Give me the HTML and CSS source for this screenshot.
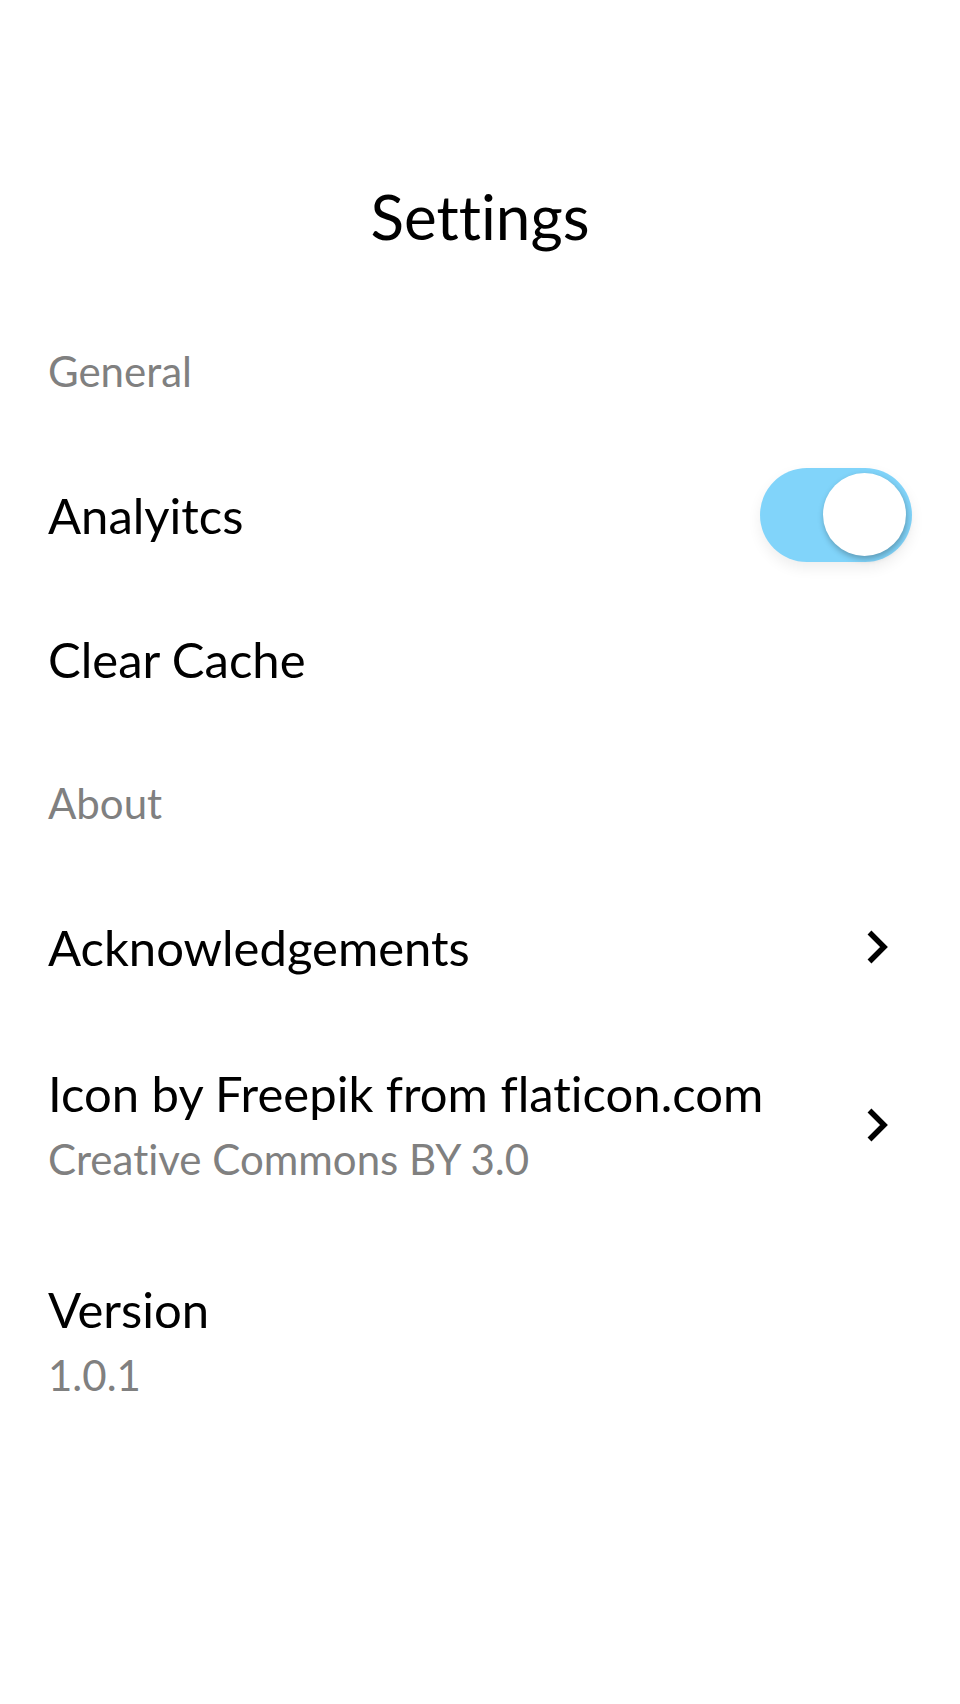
FILE: index.html
```html
<!DOCTYPE html>
<html lang="en">
<head>
<meta charset="utf-8">
<title>Settings</title>
<link rel="stylesheet" href="styles.css">
</head>
<body>
<div class="screen">
  <header class="header">
    <h1 class="title">Settings</h1>
  </header>

  <section class="section">
    <div class="row section-label">General</div>
    <div class="row">
      <span class="label">Analyitcs</span>
      <div class="toggle on" role="switch" aria-checked="true">
        <span class="knob"></span>
      </div>
    </div>
    <div class="row">
      <span class="label">Clear Cache</span>
    </div>
  </section>

  <section class="section">
    <div class="row section-label">About</div>
    <div class="row link-row">
      <span class="label">Acknowledgements</span>
      <svg class="chevron" viewBox="0 0 32 44" width="32" height="44" aria-hidden="true">
        <polyline points="9.5,7.5 24,22 9.5,36.5" />
      </svg>
    </div>
    <div class="row row-tall link-row">
      <div class="stack">
        <span class="label">Icon by Freepik from flaticon.com</span>
        <span class="sub">Creative Commons BY 3.0</span>
      </div>
      <svg class="chevron" viewBox="0 0 32 44" width="32" height="44" aria-hidden="true">
        <polyline points="9.5,7.5 24,22 9.5,36.5" />
      </svg>
    </div>
    <div class="row row-tall">
      <div class="stack">
        <span class="label">Version</span>
        <span class="sub">1.0.1</span>
      </div>
    </div>
  </section>
</div>
</body>
</html>
```

FILE: styles.css
```css
* {
  box-sizing: border-box;
}

html, body {
  margin: 0;
  padding: 0;
  background: #ffffff;
}

body {
  font-family: "Lato", "Noto Sans", sans-serif;
  font-variant-ligatures: none;
  font-feature-settings: "liga" 0, "dlig" 0;
  color: #000000;
}

.screen {
  width: 960px;
  min-height: 1704px;
  background: #ffffff;
}

.header {
  height: 299px;
  padding-top: 133px;
  display: flex;
  align-items: center;
  justify-content: center;
}

.header .title {
  margin: 0;
  height: 166px;
  display: flex;
  align-items: center;
  font-size: 62px;
  font-weight: 400;
  line-height: 1;
}

.section {
  display: flex;
  flex-direction: column;
}

.row {
  height: 144px;
  display: flex;
  align-items: center;
  justify-content: space-between;
  padding: 0 48px 0 48px;
}

.row-tall {
  height: 216px;
  padding-bottom: 5px;
}

.link-row {
  padding-right: 68px;
}

.section-label {
  font-size: 42px;
  line-height: 1;
  color: #808080;
}

.label {
  font-size: 49px;
  line-height: 1;
  color: #000000;
}

.stack {
  display: flex;
  flex-direction: column;
}

.sub {
  margin-top: 20px;
  font-size: 42px;
  line-height: 1;
  color: #808080;
}

.toggle {
  position: relative;
  width: 152px;
  height: 94px;
  border-radius: 47px;
  background: #81d4fa;
  box-shadow: 0 6px 14px rgba(0, 0, 0, 0.07);
  flex-shrink: 0;
}

.toggle .knob {
  position: absolute;
  top: 5px;
  right: 6px;
  width: 83px;
  height: 83px;
  border-radius: 50%;
  background: #ffffff;
  box-shadow: 1px 3px 6px rgba(0, 0, 0, 0.28);
}

.chevron {
  flex-shrink: 0;
  display: block;
}

.chevron polyline {
  fill: none;
  stroke: #000000;
  stroke-width: 5.5;
  stroke-linecap: butt;
  stroke-linejoin: miter;
}
```
